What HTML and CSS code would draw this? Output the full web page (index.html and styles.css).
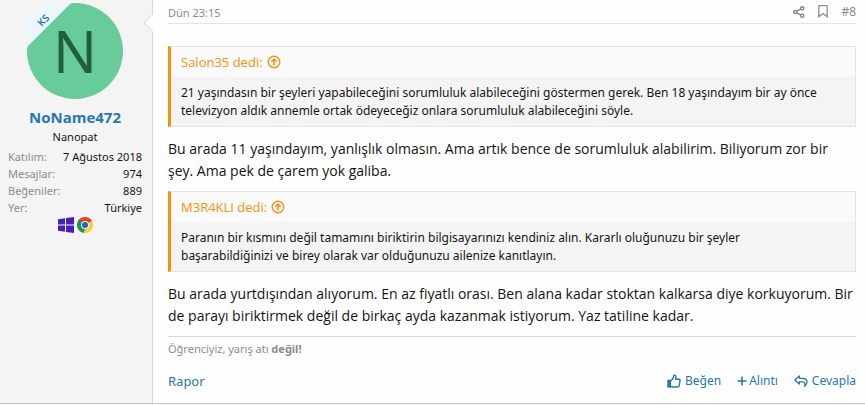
FILE: index.html
```html
<!DOCTYPE html>
<html lang="tr">
<head>
<meta charset="utf-8">
<title>Konu</title>
<link rel="stylesheet" href="styles.css">
</head>
<body>
<article class="post">
  <aside class="user">
    <a class="avatar" href="#" aria-label="NoName472">
      <svg viewBox="0 0 96 96" width="96" height="96"><circle cx="48" cy="48" r="48" fill="#67cc99"/></svg>
      <span class="letter">N</span>
      <span class="ribbon"><span class="ribbon-text">KS</span></span>
    </a>
    <a class="username" href="#">NoName472</a>
    <div class="title">Nanopat</div>
    <dl class="stats">
      <div><dt>Katılım:</dt><dd>7 Ağustos 2018</dd></div>
      <div><dt>Mesajlar:</dt><dd>974</dd></div>
      <div><dt>Beğeniler:</dt><dd>889</dd></div>
      <div><dt>Yer:</dt><dd>Türkiye</dd></div>
    </dl>
    <div class="platforms">
      <svg viewBox="0 0 16 16" width="16" height="16" fill="#4a1fb5"><path d="M0 2.2 7 1.2V7.5H0zM8 1 16 0V7.5H8zM0 8.5H7V14.8L0 13.8zM8 8.5H16V16L8 15z"/></svg>
      <svg viewBox="0 0 16 16" width="16" height="16"><path d="M8 8 1.07 4A8 8 0 0 1 14.93 4z" fill="#dd4232"/><path d="M8 8 14.93 4A8 8 0 0 1 8 16z" fill="#fccd3d"/><path d="M8 8 8 16A8 8 0 0 1 1.07 4z" fill="#159a57"/><path d="M8 4.1H15L14.2 3H8z" fill="#dd4232"/><path d="M11.4 10 8 16 6.5 15.8 8.5 11z" fill="#fccd3d"/><path d="M4.6 10 1.07 4 2 2.8 5 6z" fill="#159a57"/><circle cx="8" cy="8" r="4" fill="#f2f2f2"/><circle cx="8" cy="8" r="3" fill="#1768b8"/></svg>
    </div>
  </aside>
  <div class="main">
    <span class="arrow"></span>
    <header class="head">
      <time>Dün 23:15</time>
      <div class="tools">
        <a href="#" aria-label="Paylaş"><svg viewBox="0 0 12 12" width="12" height="12" fill="none" stroke="currentColor" stroke-width="1.5"><circle cx="2.3" cy="6" r="1.6"/><circle cx="9.2" cy="2.3" r="1.6"/><circle cx="9.2" cy="9.7" r="1.6"/><path d="M3.8 5.2 7.7 3.1M3.8 6.8 7.7 8.9"/></svg></a>
        <a class="mark" href="#" aria-label="Yer imi"><svg viewBox="0 0 10 13" width="10" height="13" fill="none" stroke="currentColor" stroke-width="1.3"><path d="M.8 1.2Q.8.7 1.3.7H8.7Q9.2.7 9.2 1.2V11.8L5 8.6.8 11.8z"/></svg></a>
        <a href="#">#8</a>
      </div>
    </header>
    <div class="content">
      <blockquote class="quote">
        <a class="source" href="#">Salon35 dedi: <svg viewBox="0 0 14 14" width="14" height="14" fill="none" stroke="currentColor" stroke-width="1.4"><circle cx="7" cy="7" r="5.8"/><path d="M7 10.5V4M4.3 6.7 7 4 9.7 6.7" stroke-width="1.5"/></svg></a>
        <p>21 yaşındasın bir şeyleri yapabileceğini sorumluluk alabileceğini göstermen gerek. Ben 18 yaşındayım bir ay önce<br>televizyon aldık annemle ortak ödeyeceğiz onlara sorumluluk alabileceğini söyle.</p>
      </blockquote>
      <p class="text">Bu arada 11 yaşındayım, yanlışlık olmasın. Ama artık bence de sorumluluk alabilirim. Biliyorum zor bir<br>şey. Ama pek de çarem yok galiba.</p>
      <blockquote class="quote">
        <a class="source" href="#">M3R4KLI dedi: <svg viewBox="0 0 14 14" width="14" height="14" fill="none" stroke="currentColor" stroke-width="1.4"><circle cx="7" cy="7" r="5.8"/><path d="M7 10.5V4M4.3 6.7 7 4 9.7 6.7" stroke-width="1.5"/></svg></a>
        <p>Paranın bir kısmını değil tamamını biriktirin bilgisayarınızı kendiniz alın. Kararlı oluğunuzu bir şeyler<br>başarabildiğinizi ve birey olarak var olduğunuzu ailenize kanıtlayın.</p>
      </blockquote>
      <p class="text">Bu arada yurtdışından alıyorum. En az fiyatlı orası. Ben alana kadar stoktan kalkarsa diye korkuyorum. Bir<br>de parayı biriktirmek değil de birkaç ayda kazanmak istiyorum. Yaz tatiline kadar.</p>
    </div>
    <div class="signature">Öğrenciyiz, yarış atı <b>değil!</b></div>
    <footer class="actions">
      <a class="report" href="#">Rapor</a>
      <div class="right">
        <a class="like" href="#"><svg viewBox="0 0 14 14" width="14" height="14" fill="none" stroke="currentColor" stroke-width="1.4" stroke-linejoin="round"><path d="M1 6.5H3.3V13H1z" fill="currentColor"/><path d="M3.8 7C5.5 5.8 6.6 4 7 1.2 8.9.8 9.5 2.6 8.6 5.3H12Q13.4 5.5 13 7L12.2 11.6Q11.9 13 10.5 13H6L3.8 12.4"/></svg>Beğen</a>
        <a class="add" href="#"><svg viewBox="0 0 10 10" width="10" height="10" stroke="currentColor" stroke-width="1.6"><path d="M5 .5V9.5M.5 5H9.5"/></svg>Alıntı</a>
        <a class="reply" href="#"><svg viewBox="0 0 14 12" width="14" height="12" fill="none" stroke="currentColor" stroke-width="1.3" stroke-linejoin="round"><path d="M.8 5 5.4.9V3.3H9C14 3.6 14.2 8 10.7 11.3 11.3 8 10.5 6.9 8.5 6.8H5.4V9.1z"/></svg>Cevapla</a>
      </div>
    </footer>
  </div>
</article>
</body>
</html>
```
FILE: styles.css
```css
* { box-sizing: border-box; }
body, p, dl, dd, blockquote { margin: 0; }
body {
  background: #f4f4f4;
  color: #141414;
  font: 12px/16px "Noto Sans", "Open Sans", sans-serif;
}
a { color: #2577b1; text-decoration: none; }
svg { flex: none; }
.post {
  display: grid;
  grid-template-columns: 153px minmax(0, 1fr);
  background: #fefefe;
  border-bottom: 1px solid #c8c8c8;
}
.user {
  display: flex;
  flex-direction: column;
  align-items: center;
  padding: 3px 10px 0 8px;
  background: #f4f4f4;
  border-right: 1px solid #d6d6d6;
}
.avatar {
  position: relative;
  width: 96px;
  height: 96px;
}
.avatar svg { display: block; }
.letter {
  position: absolute;
  inset: 0;
  color: #206040;
  font: 58px/96px "Noto Sans", sans-serif;
  text-align: center;
}
.ribbon {
  position: absolute;
  top: 0;
  left: 0;
  width: 44px;
  height: 44px;
  background: #edf6fd;
  clip-path: polygon(42% 0, 100% 0, 0 100%, 0 42%);
}
.ribbon-text {
  position: absolute;
  top: 11px;
  left: 8px;
  width: 16px;
  font-size: 10px;
  font-weight: 600;
  line-height: 12px;
  text-align: center;
  transform: rotate(-45deg);
}
.username {
  margin-top: 7px;
  font: 700 15px/22px "Open Sans", sans-serif;
}
.title {
  font-size: 11px;
  line-height: 18px;
}
.stats {
  align-self: stretch;
  margin-top: 2px;
}
.stats div {
  display: flex;
  justify-content: space-between;
  font-size: 11px;
  line-height: 17px;
  white-space: nowrap;
}
.stats dt { color: #8c8c8c; }
.platforms { display: flex; gap: 3px; margin-top: 1px; }
.main {
  position: relative;
  padding: 0 9px 13px 15px;
}
.arrow {
  position: absolute;
  top: 16px;
  left: -7px;
  width: 14px;
  height: 14px;
  background: #fefefe;
  border: solid #d6d6d6;
  border-width: 0 0 1px 1px;
  transform: rotate(45deg);
  clip-path: polygon(0 0, 100% 100%, 0 100%);
}
.head {
  display: flex;
  justify-content: space-between;
  align-items: center;
  height: 24px;
  color: #8c8c8c;
  border-bottom: 1px solid #e3e3e3;
}
.head time {
  padding-top: 2px;
  font-size: 11px;
}
.tools { display: flex; align-items: center; gap: 13px; }
.tools a { display: flex; color: #8c8c8c; }
.content { padding-top: 22px; }
.quote {
  background: #f4f4f4;
  border: 1px solid #e3e3e3;
  border-left: 3px solid #f2930d;
}
.source {
  display: flex;
  align-items: center;
  gap: 4px;
  padding: 6px 10px;
  background: #fafafa;
  color: #f2930d;
  font: 13px/18px "Open Sans", "Noto Sans", sans-serif;
}
.quote p { padding: 7px 10px 6px; line-height: 18px; }
.text {
  margin: 11px 0 9px;
  font: 14px/22px "Open Sans", "Noto Sans", sans-serif;
}
.quote p, .text { white-space: nowrap; }
.signature {
  padding-top: 4px;
  border-top: 1px solid #d8d8d8;
  color: #8c8c8c;
  font-size: 11px;
}
.actions {
  display: flex;
  justify-content: space-between;
  margin-top: 15px;
  line-height: 18px;
}
.report { font-size: 13px; }
.right { display: flex; gap: 16px; }
.right a { display: flex; align-items: center; gap: 4px; }
.right .add { gap: 2px; }
```
